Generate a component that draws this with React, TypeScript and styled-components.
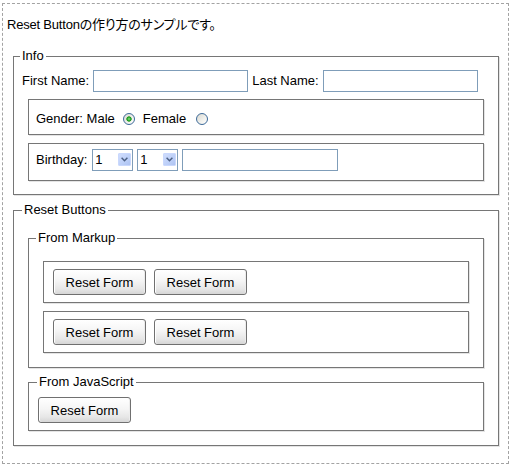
import React, { useRef } from "react";
import styled, { createGlobalStyle } from "styled-components";

const GlobalStyle = createGlobalStyle`
  html, body {
    margin: 0;
    background: #fff;
  }
  body {
    font-family: "Liberation Sans", Arial, "Noto Sans CJK JP", sans-serif;
    font-size: 13px;
    color: #000;
  }
`;

const Page = styled.div`
  box-sizing: border-box;
  width: 507px;
  height: 461px;
  margin: 3px 0 0 2px;
  border: 1px dashed #a3a3a3;
`;

const Intro = styled.p`
  margin: 13px 0 0 4px;
  line-height: 16px;
  font-feature-settings: "palt";
  letter-spacing: -0.2px;
`;

const Form = styled.form`
  margin: 0;
`;

// outer fieldset (Info / Reset Buttons)
const Section = styled.fieldset<{ $pad: string; $mt: number }>`
  margin: ${(p) => p.$mt}px 9px 0 10px;
  padding: ${(p) => p.$pad};
  min-width: 0;
  border: 1px solid #767676;
  box-shadow: 1px 1px 0 #e4e4e4;
`;

// nested fieldset
const SubGroup = styled(Section)`
  margin: ${(p) => p.$mt}px 6px 0 6px;
`;

const Legend = styled.legend<{ $shift?: number }>`
  margin-left: ${(p) => p.$shift ?? -3}px;
  padding: 0 2px;
  line-height: 16px;
`;

const Row = styled.div<{ $h: number }>`
  display: flex;
  align-items: center;
  height: ${(p) => p.$h}px;
  line-height: 16px;
  white-space: nowrap;
`;

const Label = styled.span<{ $ml?: number; $mr?: number }>`
  margin-left: ${(p) => p.$ml ?? 0}px;
  margin-right: ${(p) => p.$mr ?? 0}px;
`;

const TextBox = styled.input.attrs({ type: "text" })<{ $w: number; $ml?: number }>`
  box-sizing: border-box;
  width: ${(p) => p.$w}px;
  height: 22px;
  margin: 0 0 0 ${(p) => p.$ml ?? 0}px;
  padding: 1px 3px;
  border: 1px solid #7f9db9;
  border-radius: 0;
  background: #fff;
  font: inherit;
  outline: none;
`;

const SelectBox = styled.span<{ $ml?: number }>`
  position: relative;
  display: inline-block;
  margin-left: ${(p) => p.$ml ?? 0}px;
  height: 22px;
`;

const Select = styled.select`
  box-sizing: border-box;
  width: 41px;
  height: 22px;
  margin: 0;
  padding: 0 0 0 2px;
  border: 1px solid #7f9db9;
  border-radius: 0;
  background: #fff;
  font: inherit;
  appearance: none;
  outline: none;
`;

const SelectArrow = styled.span`
  position: absolute;
  right: 2px;
  top: 4px;
  width: 13px;
  height: 13px;
  box-sizing: border-box;
  border: 1px solid #c9d8fd;
  border-radius: 1px;
  background: linear-gradient(135deg, #d0ddfd 0%, #bccff8 60%, #aec3f2 100%);
  pointer-events: none;
  display: flex;
  align-items: center;
  justify-content: center;
`;

const Radio = styled.input.attrs({ type: "radio" })<{ $ml?: number; $mr?: number }>`
  appearance: none;
  box-sizing: border-box;
  width: 12px;
  height: 12px;
  margin: 0 ${(p) => p.$mr ?? 0}px 0 ${(p) => p.$ml ?? 0}px;
  border: 1px solid #3d6a99;
  border-radius: 50%;
  background: linear-gradient(135deg, #d9d9d2 0%, #f2f2ee 60%, #fff 100%);
  &:checked {
    background: radial-gradient(circle at 50% 50%, #8ee88e 0, #2fb02f 1.5px, #1d8f1d 2.3px, transparent 3px),
      linear-gradient(135deg, #d9d9d2 0%, #f2f2ee 60%, #fff 100%);
  }
`;

const ButtonRow = styled.div`
  display: flex;
  gap: 8px;
`;

const ResetButton = styled.button`
  box-sizing: border-box;
  width: 93px;
  height: 26px;
  margin: 0;
  padding: 0;
  border: 1px solid #707070;
  border-radius: 3px;
  background: linear-gradient(#ffffff 0%, #f5f5f5 45%, #e6e6e6 80%, #d6d6d6 100%);
  box-shadow: inset 1px 0 0 #fff, inset -1px 0 0 #ececec;
  font: inherit;
  color: #000;
  cursor: pointer;
`;

const Chevron = () => (
  <svg width="7" height="5" viewBox="0 0 7 5">
    <path d="M0.6 0.8 L3.5 3.7 L6.4 0.8" fill="none" stroke="#4d6185" strokeWidth="1.5" />
  </svg>
);

const Dropdown = ({ ml, max }: { ml?: number; max: number }) => (
  <SelectBox $ml={ml}>
    <Select defaultValue="1">
      {Array.from({ length: max }, (_, i) => (
        <option key={i} value={i + 1}>
          {i + 1}
        </option>
      ))}
    </Select>
    <SelectArrow>
      <Chevron />
    </SelectArrow>
  </SelectBox>
);

export default function App() {
  const formRef = useRef<HTMLFormElement>(null);

  return (
    <>
      <GlobalStyle />
      <Page>
        <Intro>Reset Buttonの作り方のサンプルです。</Intro>
        <Form ref={formRef}>
          <Section $mt={15} $pad="6px 8px 13px 8px">
            <Legend $shift={-2}>Info</Legend>
            <Row $h={22}>
              <Label $mr={4}>First Name:</Label>
              <TextBox $w={155} />
              <Label $ml={4} $mr={4}>Last Name:</Label>
              <TextBox $w={155} />
            </Row>
            <SubGroup $mt={7} $pad="11px 6px 7px 7px">
              <Row $h={16}>
                <Label>Gender: Male</Label>
                <Radio name="gender" defaultChecked $ml={8} $mr={8} />
                <Label>Female</Label>
                <Radio name="gender" $ml={10} />
              </Row>
            </SubGroup>
            <SubGroup $mt={8} $pad="5px 6px 9px 7px">
              <Row $h={22}>
                <Label $mr={5}>Birthday:</Label>
                <Dropdown max={12} />
                <Dropdown ml={4} max={31} />
                <TextBox $w={156} $ml={4} />
              </Row>
            </SubGroup>
          </Section>

          <Section $mt={7} $pad="12px 8px 14px 8px">
            <Legend $shift={0}>Reset Buttons</Legend>
            <SubGroup $mt={0} $pad="15px 8px 14px 8px">
              <Legend $shift={-1}>From Markup</Legend>
              <SubGroup $mt={0} $pad="7px 8px 7px 9px">
                <ButtonRow>
                  <ResetButton type="reset">Reset Form</ResetButton>
                  <ResetButton type="reset">Reset Form</ResetButton>
                </ButtonRow>
              </SubGroup>
              <SubGroup $mt={8} $pad="7px 8px 7px 9px">
                <ButtonRow>
                  <ResetButton type="reset">Reset Form</ResetButton>
                  <ResetButton type="reset">Reset Form</ResetButton>
                </ButtonRow>
              </SubGroup>
            </SubGroup>
            <SubGroup $mt={6} $pad="7px 8px 7px 9px">
              <Legend $shift={-1}>From JavaScript</Legend>
              <ResetButton type="button" onClick={() => formRef.current?.reset()}>
                Reset Form
              </ResetButton>
            </SubGroup>
          </Section>
        </Form>
      </Page>
    </>
  );
}
